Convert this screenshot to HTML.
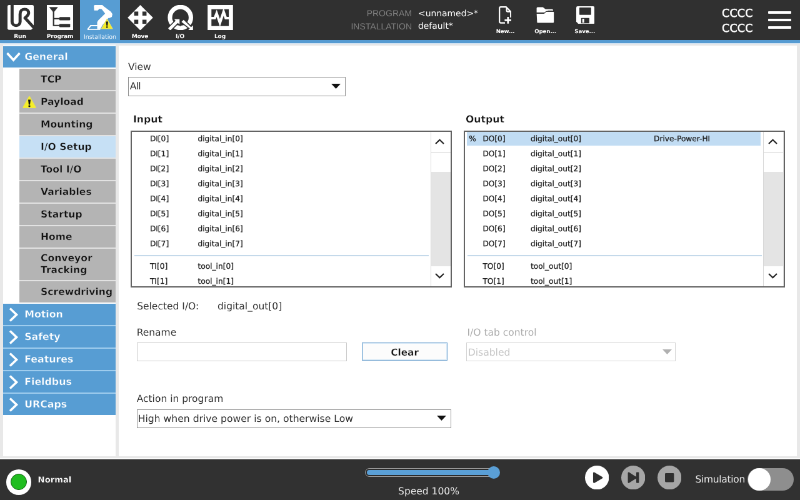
<!DOCTYPE html>
<html><head><meta charset="utf-8"><title>PolyScope - Installation - I/O Setup</title>
<style>
*{box-sizing:border-box;margin:0;padding:0}
html,body{width:800px;height:500px;overflow:hidden;background:#ebebeb}
body{font-family:"DejaVu Sans","Liberation Sans",sans-serif;color:#222;text-rendering:geometricPrecision}
#app{position:absolute;left:0;top:0;width:1280px;height:800px;transform:scale3d(.625,.625,1) translateZ(0);transform-origin:0 0;will-change:transform;background:#e8e8e8;overflow:hidden}
.abs{position:absolute}
#hdr{position:absolute;left:0;top:0;width:1280px;height:64px;background:#303030}
#hline{position:absolute;left:0;top:64px;width:1280px;height:4.600px;background:#569bd2;box-shadow:0 1.500px 1.500px #cfe2f2}
.tab{position:absolute;top:0;width:64px;height:64px;text-align:center}
.tab.sel{background:#579dd3;height:66px}
.tab svg{position:absolute;left:11.500px;top:7.700px;width:41px;height:40.600px}
.tab span{position:absolute;left:-10px;right:-10px;top:53px;font-size:9.100px;font-weight:bold;color:#fff;line-height:13px;white-space:nowrap;letter-spacing:-.200px}
.tab.sel span{font-weight:normal;font-size:9.400px;color:#f4f9fd;letter-spacing:0}
.hl{position:absolute;right:621px;font-family:"Liberation Sans",sans-serif;color:#808080;font-size:14px;line-height:20px;white-space:nowrap}
.hv{position:absolute;left:669px;color:#fff;font-size:13.900px;line-height:20px;white-space:nowrap}
.fl{position:absolute;width:60px;text-align:center;top:44.500px;font-size:8.700px;font-weight:bold;color:#fff;line-height:13px;letter-spacing:-.100px}
.cc{position:absolute;left:1155px;color:#fff;font-size:17.500px;line-height:20px;letter-spacing:.200px;-webkit-text-stroke:.550px #fff}
/* sidebar */
#side{position:absolute;left:5px;top:71px;width:180.200px;height:659px;background:linear-gradient(#e6f0f8,#fff 4px)}
.grp{position:absolute;left:0;width:179.500px;height:34.300px;background:#579dd3;color:#fff;font-weight:bold;font-size:15.800px;line-height:34px;padding-left:34.200px;-webkit-text-stroke:.400px #579dd3}
.grp svg{position:absolute;left:5px;top:6px;width:23px;height:23px}
.it{position:absolute;left:26px;width:153.500px;height:34px;background:#b4b4b4;color:#111;font-weight:bold;font-size:15.600px;line-height:34px;padding-left:34px;white-space:nowrap;-webkit-text-stroke:.400px #b4b4b4}
.it.sel{background:#c6e0f5;-webkit-text-stroke-color:#c6e0f5}
/* main */
#main{position:absolute;left:189.600px;top:72.800px;width:1085.600px;height:656.800px;background:#fff}
.lbl{position:absolute;font-size:15.500px;line-height:20px;color:#333;white-space:nowrap}
.lbl.b{font-weight:bold;font-size:15.700px;color:#111;-webkit-text-stroke:.350px #fff}
.sel-box{position:absolute;border:1.600px solid #8f8f8f;background:#fff;font-size:15.600px;color:#2a2a2a;white-space:nowrap}
.list{position:absolute;border:2px solid #636363;background:#fff;overflow:hidden}
.row{position:absolute;left:0;height:24px;font-size:12.200px;line-height:24px;color:#1c1c1c;white-space:nowrap;-webkit-text-stroke:.300px #1c1c1c}
.row span{position:absolute;top:0}
.sb{position:absolute;top:0;right:0;width:32.400px;bottom:0;background:#e4e4e4;border-left:1.400px solid #d8d8d8}
.sbb{position:absolute;left:0;width:31px;height:33.600px;background:#fff;border-bottom:1.400px solid #d0d0d0;border-top:0}
#ftr{position:absolute;left:0;top:736px;width:1280px;height:64px;background:#313131}
</style></head><body>
<div id="app">
<div id="hdr">
  <div class="tab" style="left:0"><svg viewBox="0 0 40 40" preserveAspectRatio="none" style="left:11.500px;width:42px;top:8.200px;height:39.800px"><rect width="40" height="40" rx="2.5" fill="#fff"/><path d="M7 -1V27a6.100 6.100 0 0 0 12.200 0V14.500c0-4.500 2.800-7.700 6.800-7.700s6.200 2.700 6.200 6c0 3.500-2.500 4.900-5.500 8.100L42 38.500" fill="none" stroke="#303030" stroke-width="4.700" stroke-linejoin="round"/><path d="M35 41L41 35V41z" fill="#303030"/></svg><span>Run</span></div>
  <div class="tab" style="left:64px"><svg viewBox="0 0 40 40" preserveAspectRatio="none" style="left:11px;width:42px"><rect width="40" height="40" fill="#fff"/><path d="M4 3.600h12.400l-6.200 8z" fill="#303030" stroke="#303030" stroke-width=".6"/><path d="M10.200 9V32.300H19M10.200 21.500H19" fill="none" stroke="#303030" stroke-width="2.100"/><rect x="19" y="19" width="16.500" height="5.200" rx="1.200" fill="#303030"/><rect x="19" y="29.700" width="16.500" height="5.200" rx="1.200" fill="#303030"/></svg><span>Program</span></div>
  <div class="tab sel" style="left:128px"><svg viewBox="0 0 40 40"><path d="M-.5 39L4.800 32.600H15.500M-.5 39H20" fill="none" stroke="#fff" stroke-width="1.900"/><path d="M9.800 1L11.300 0H23.300L25.200 1.900 36.700 10.600 39.100 14.400 38.200 18.700 34.800 20.400H32.900L23.300 31.700 20.400 37.500H15.100V26.900L17 24 27.600 13.500 22.300 6.700 18.500 5.800 16 8.700H10.300z" fill="#fff"/><path d="M30.500 22L39.300 37.500H21.800z" fill="#f4ec24" stroke="#ece56a" stroke-width="1" stroke-linejoin="round"/><path d="M28.900 26h3.400l-.8 6.800h-1.800z" fill="#1c1c1c"/><rect x="29.300" y="33.700" width="2.500" height="2.300" rx=".5" fill="#1c1c1c"/></svg><span>Installation</span></div>
  <div class="tab" style="left:192px"><svg viewBox="0 0 40 40"><path d="M20 0L40 20 20 40 0 20z" fill="#fff"/><g fill="#303030"><rect x="10.300" y="10.300" width="6.500" height="6.500"/><rect x="23.300" y="10.300" width="6.500" height="6.500"/><rect x="10.300" y="23.200" width="6.500" height="6.500"/><rect x="23.300" y="23.200" width="6.500" height="6.500"/></g></svg><span>Move</span></div>
  <div class="tab" style="left:256px"><svg viewBox="0 0 40 40"><circle cx="20.200" cy="19.700" r="16.500" fill="none" stroke="#fff" stroke-width="7"/><g stroke="#303030" stroke-width="3.200" fill="#fff" stroke-linejoin="miter" paint-order="stroke"><path d="M.8 36.800L12.600 25 10.500 22.300H18.800V30.600L16 28.400 4.200 40.200z"/><path d="M25.200 23.300L36.900 35 40 32V40H32L35 36.900 21.800 26.700z"/></g></svg><span>I/O</span></div>
  <div class="tab" style="left:320px"><svg viewBox="0 0 40 40"><rect width="40" height="40" fill="#fff"/><rect x="6" y="6.700" width="27.400" height="26.500" fill="#303030"/><path d="M5 20.700h6.200l3-7.500 5.200 15 5.800-17.500 3.400 10H35" fill="none" stroke="#fff" stroke-width="4" stroke-linejoin="miter"/></svg><span>Log</span></div>

  <div class="hl" style="top:10.600px">PROGRAM</div>
  <div class="hl" style="top:31.600px">INSTALLATION</div>
  <div class="hv" style="top:11.500px">&lt;unnamed&gt;*</div>
  <div class="hv" style="top:32px">default*</div>

  <svg class="abs" style="left:797.800px;top:9.800px" width="20.600" height="28" viewBox="0 0 20.600 28"><path d="M1.200 3.200q0-2 2-2H12l7.200 7.500V18M12.600 1.500v5.300q0 1.800 1.800 1.800h4.500M1.200 3v21.600q0 2 2 2H10" fill="none" stroke="#fff" stroke-width="2.200" stroke-linejoin="round"/><path d="M14.800 17v10.800M9.400 22.400h11" stroke="#fff" stroke-width="2.700" fill="none"/></svg>
  <svg class="abs" style="left:858px;top:10.600px" width="28.800" height="26.200" viewBox="0 0 28.800 26.200"><path d="M.6 2q0-1.600 1.600-1.600h8.400l4.300 3.400h10.600q1.300 0 1.300 1.300v4H.6z" fill="#fff"/><rect x="18.300" y="5" width="8.500" height="3" fill="#b9b9b9"/><path d="M0 10.400h12.400l3.500-3h11.500q1.400 0 1.400 1.400v15.400q0 1.800-1.800 1.800H2.400Q.8 26 .8 24.400z" fill="#fff" stroke="#303030" stroke-width="1.100"/></svg>
  <svg class="abs" style="left:921.600px;top:9.500px" width="29.200" height="28.400" viewBox="0 0 29.200 28.400"><path d="M2.400 0h24.400q2.400 0 2.400 2.400v23.600q0 2.400-2.400 2.400H3.600L0 24.800V2.400Q0 0 2.400 0z" fill="#fff"/><rect x="5" y="2" width="18.800" height="11.800" rx=".8" fill="#303030"/><rect x="7.900" y="18.700" width="13" height="8.600" rx=".6" fill="#303030"/><rect x="9.700" y="20" width="3" height="6.400" fill="#fff"/></svg>
  <div class="fl" style="left:778.600px">New...</div>
  <div class="fl" style="left:842.600px">Open...</div>
  <div class="fl" style="left:905.800px">Save...</div>

  <div class="cc" style="top:12.300px">CCCC</div>
  <div class="cc" style="top:36.300px">CCCC</div>
  <div class="abs" style="left:1229px;top:18.400px;width:37px;height:4px;background:#fff;border-radius:1px"></div>
  <div class="abs" style="left:1229px;top:30.400px;width:37px;height:4px;background:#fff;border-radius:1px"></div>
  <div class="abs" style="left:1229px;top:42.400px;width:37px;height:4px;background:#fff;border-radius:1px"></div>
</div>
<div id="hline"></div>

<div id="side">
  <div class="abs" style="left:26px;top:41px;width:153.500px;height:371px;background:#e2e2e2"></div>
  <div class="abs" style="left:0;top:417px;width:179.500px;height:175px;background:#9fcdee"></div>
  <div class="grp" style="top:3px"><svg viewBox="0 0 23 23"><path d="M1.500 5L11.500 16 21.500 5" fill="none" stroke="#fff" stroke-width="3.600"/></svg>General</div>
  <div class="it" style="top:39.3px">TCP</div>
  <div class="it" style="top:75.3px"><svg class="abs" style="left:5px;top:6.500px" width="22" height="21" viewBox="0 0 21 20"><path d="M10.500 2L19.500 18H1.500z" fill="#f7f022" stroke="#f1ea3a" stroke-width="2.200" stroke-linejoin="round"/><path d="M8.600 6.200h3.800l-.9 7.600h-2z" fill="#111"/><rect x="9.100" y="14.800" width="2.800" height="2.600" rx=".6" fill="#111"/></svg>Payload</div>
  <div class="it" style="top:111.3px">Mounting</div>
  <div class="it sel" style="top:147.3px">I/O Setup</div>
  <div class="it" style="top:183.3px">Tool I/O</div>
  <div class="it" style="top:219.3px">Variables</div>
  <div class="it" style="top:255.3px">Startup</div>
  <div class="it" style="top:291.3px">Home</div>
  <div class="it" style="top:327.300px;height:50px;line-height:19px;padding-top:6px;white-space:normal">Conveyor<br>Tracking</div>
  <div class="it" style="top:379.3px">Screwdriving</div>
  <div class="grp" style="top:415px"><svg viewBox="0 0 23 23"><path d="M6 1.500L16.500 11.500 6 21.500" fill="none" stroke="#fff" stroke-width="3.600"/></svg>Motion</div>
  <div class="grp" style="top:451px"><svg viewBox="0 0 23 23"><path d="M6 1.500L16.500 11.500 6 21.500" fill="none" stroke="#fff" stroke-width="3.600"/></svg>Safety</div>
  <div class="grp" style="top:487px"><svg viewBox="0 0 23 23"><path d="M6 1.500L16.500 11.500 6 21.500" fill="none" stroke="#fff" stroke-width="3.600"/></svg>Features</div>
  <div class="grp" style="top:523px"><svg viewBox="0 0 23 23"><path d="M6 1.500L16.500 11.500 6 21.500" fill="none" stroke="#fff" stroke-width="3.600"/></svg>Fieldbus</div>
  <div class="grp" style="top:559px"><svg viewBox="0 0 23 23"><path d="M6 1.500L16.500 11.500 6 21.500" fill="none" stroke="#fff" stroke-width="3.600"/></svg>URCaps</div>
</div>

<div id="main">
  <div class="lbl" style="left:15.4px;top:24.100px">View</div>
  <div class="sel-box" style="left:15.6px;top:50.600px;width:348.200px;height:30.600px;line-height:28.700px;padding-left:1.500px;letter-spacing:-.700px">All<svg class="abs" style="right:7.300px;top:9.500px" width="15" height="8" viewBox="0 0 15 8"><path d="M0 0h15L7.500 8z" fill="#111"/></svg></div>

  <div class="lbl b" style="left:23.4px;top:107.8px">Input</div>
  <div class="lbl b" style="left:555.4px;top:107.8px">Output</div>

  <div class="list" style="left:19.8px;top:135.8px;width:513.900px;height:251.100px">
    <div class="row" style="top:-0.3px"><span style="left:28.500px">DI[0]</span><span style="left:105px">digital_in[0]</span></div>
    <div class="row" style="top:23.7px"><span style="left:28.500px">DI[1]</span><span style="left:105px">digital_in[1]</span></div>
    <div class="row" style="top:47.7px"><span style="left:28.500px">DI[2]</span><span style="left:105px">digital_in[2]</span></div>
    <div class="row" style="top:71.7px"><span style="left:28.500px">DI[3]</span><span style="left:105px">digital_in[3]</span></div>
    <div class="row" style="top:95.7px"><span style="left:28.500px">DI[4]</span><span style="left:105px">digital_in[4]</span></div>
    <div class="row" style="top:119.7px"><span style="left:28.500px">DI[5]</span><span style="left:105px">digital_in[5]</span></div>
    <div class="row" style="top:143.7px"><span style="left:28.500px">DI[6]</span><span style="left:105px">digital_in[6]</span></div>
    <div class="row" style="top:167.7px"><span style="left:28.500px">DI[7]</span><span style="left:105px">digital_in[7]</span></div>
    <div class="abs" style="left:4px;top:197.400px;width:471px;height:2.200px;background:#c4d9ea"></div>
    <div class="row" style="top:203.8px"><span style="left:28.500px">TI[0]</span><span style="left:105px">tool_in[0]</span></div>
    <div class="row" style="top:227.8px"><span style="left:28.500px">TI[1]</span><span style="left:105px">tool_in[1]</span></div>
    <div class="sb"><div class="abs" style="left:0;top:33.600px;width:31px;height:31px;background:#fff"></div><div class="sbb" style="top:0"><svg class="abs" style="left:6.500px;top:11.500px" width="15" height="9" viewBox="0 0 15 9"><path d="M1 8L7.500 1.800 14 8" fill="none" stroke="#222" stroke-width="2.200"/></svg></div><div class="sbb" style="bottom:0;border-bottom:0;height:32px"><svg class="abs" style="left:6.500px;top:11.500px" width="15" height="9" viewBox="0 0 15 9"><path d="M1 1L7.500 7.200 14 1" fill="none" stroke="#222" stroke-width="2.200"/></svg></div></div>
  </div>

  <div class="list" style="left:552.3px;top:135.8px;width:513.900px;height:251.100px">
    <div class="abs" style="left:3.500px;top:.6px;width:470px;height:21.400px;background:#c1dcf3"></div>
    <div class="row" style="top:-0.3px"><span style="left:6.300px">%</span><span style="left:28.500px">DO[0]</span><span style="left:105px">digital_out[0]</span><span style="left:302.200px">Drive-Power-HI</span></div>
    <div class="row" style="top:23.7px"><span style="left:28.500px">DO[1]</span><span style="left:105px">digital_out[1]</span></div>
    <div class="row" style="top:47.7px"><span style="left:28.500px">DO[2]</span><span style="left:105px">digital_out[2]</span></div>
    <div class="row" style="top:71.7px"><span style="left:28.500px">DO[3]</span><span style="left:105px">digital_out[3]</span></div>
    <div class="row" style="top:95.7px"><span style="left:28.500px">DO[4]</span><span style="left:105px">digital_out[4]</span></div>
    <div class="row" style="top:119.7px"><span style="left:28.500px">DO[5]</span><span style="left:105px">digital_out[5]</span></div>
    <div class="row" style="top:143.7px"><span style="left:28.500px">DO[6]</span><span style="left:105px">digital_out[6]</span></div>
    <div class="row" style="top:167.7px"><span style="left:28.500px">DO[7]</span><span style="left:105px">digital_out[7]</span></div>
    <div class="abs" style="left:4px;top:197.400px;width:471px;height:2.200px;background:#c4d9ea"></div>
    <div class="row" style="top:203.8px"><span style="left:28.500px">TO[0]</span><span style="left:105px">tool_out[0]</span></div>
    <div class="row" style="top:227.8px"><span style="left:28.500px">TO[1]</span><span style="left:105px">tool_out[1]</span></div>
    <div class="sb"><div class="abs" style="left:0;top:33.600px;width:31px;height:31px;background:#fff"></div><div class="sbb" style="top:0"><svg class="abs" style="left:6.500px;top:11.500px" width="15" height="9" viewBox="0 0 15 9"><path d="M1 8L7.500 1.800 14 8" fill="none" stroke="#222" stroke-width="2.200"/></svg></div><div class="sbb" style="bottom:0;border-bottom:0;height:32px"><svg class="abs" style="left:6.500px;top:11.500px" width="15" height="9" viewBox="0 0 15 9"><path d="M1 1L7.500 7.200 14 1" fill="none" stroke="#222" stroke-width="2.200"/></svg></div></div>
  </div>

  <div class="lbl" style="left:29.6px;top:407.3px">Selected I/O:</div>
  <div class="lbl" style="left:158.4px;top:407.3px">digital_out[0]</div>
  <div class="lbl" style="left:29.1px;top:448.9px">Rename</div>
  <div class="abs" style="left:29.1px;top:474.9px;width:336.700px;height:29.900px;border:1.600px solid #c9c9c9;background:#fff"></div>
  <div class="abs" style="left:389.1px;top:475.0px;width:137.800px;height:29.600px;border:1.600px solid #6a9fcd;box-shadow:inset 0 0 0 1px #d3e6f5;background:#fcfcfc;text-align:center;font-weight:bold;font-size:15.300px;line-height:31px;color:#111;-webkit-text-stroke:.350px #fcfcfc">Clear</div>
  <div class="lbl" style="left:557.9px;top:448.9px;color:#ababab">I/O tab control</div>
  <div class="sel-box" style="left:556.6px;top:474.9px;width:335.200px;height:29.900px;line-height:30.500px;padding-left:1.500px;color:#c4c4c4;border-color:#d2d2d2">Disabled<svg class="abs" style="right:5.500px;top:10.500px" width="15" height="8" viewBox="0 0 15 8"><path d="M0 0h15L7.500 8z" fill="#b0b0b0"/></svg></div>
  <div class="lbl" style="left:29.1px;top:555.2px">Action in program</div>
  <div class="sel-box" style="left:29.2px;top:582.0px;width:503px;height:30.400px;line-height:28.700px;padding-left:1px">High when drive power is on, otherwise Low<svg class="abs" style="right:6.5px;top:9.5px" width="15" height="8" viewBox="0 0 15 8"><path d="M0 0h15L7.500 8z" fill="#111"/></svg></div>
</div>

<div class="abs" style="left:0;top:732.600px;width:1280px;height:2.600px;background:#fafafa"></div>
<div class="abs" style="left:0;top:735.200px;width:1280px;height:3px;background:#1e1e1e"></div>
<div id="ftr">
  <div class="abs" style="left:9.600px;top:14.800px;width:40.800px;height:40.800px;border-radius:50%;background:#fff"></div>
  <div class="abs" style="left:17px;top:22.200px;width:26px;height:26px;border-radius:50%;background:#20bd20;border:1.800px solid #0c5f0c"></div>
  <div class="abs" style="left:60.600px;top:23.800px;color:#fff;font-weight:bold;font-size:13.200px;line-height:18px;-webkit-text-stroke:.300px #313131">Normal</div>
  <div class="abs" style="left:583.500px;top:12.600px;width:209px;height:14.200px;border-radius:7.100px;background:#2b2b2b;border:1.400px solid #a2a2a2"></div>
  <div class="abs" style="left:586.500px;top:15.600px;width:200px;height:8.200px;border-radius:4.100px;background:#5a9fd6"></div>
  <div class="abs" style="left:780px;top:9.700px;width:20px;height:20px;border-radius:50%;background:#5a9fd6"></div>
  <div class="abs" style="left:586px;top:39.800px;width:200px;text-align:center;color:#e6e6e6;font-size:15.500px;line-height:20px">Speed 100%</div>
  <svg class="abs" style="left:935.600px;top:8.800px" width="38.400" height="38.400" viewBox="0 0 40 40"><circle cx="20" cy="20" r="20" fill="#fff"/><path d="M15 12.500L28 20 15 27.500z" fill="#303030" stroke="#303030" stroke-width="3" stroke-linejoin="round"/></svg>
  <svg class="abs" style="left:993.900px;top:8.800px" width="38.400" height="38.400" viewBox="0 0 40 40"><circle cx="20" cy="20" r="20" fill="#a6a6a6"/><path d="M12.500 12.500L24 20 12.500 27.500z" fill="#303030" stroke="#303030" stroke-width="3" stroke-linejoin="round"/><rect x="25" y="11" width="4.500" height="18" rx="1" fill="#303030"/></svg>
  <svg class="abs" style="left:1052px;top:8.800px" width="38.400" height="38.400" viewBox="0 0 40 40"><circle cx="20" cy="20" r="20" fill="#a6a6a6"/><rect x="12.500" y="12.500" width="15" height="15" rx="1.500" fill="#303030"/></svg>
  <div class="abs" style="left:1112.500px;top:21.300px;color:#e6e6e6;font-size:15.500px;line-height:20px;letter-spacing:-.3px">Simulation</div>
  <div class="abs" style="left:1196px;top:13.100px;width:74.400px;height:36px;border-radius:18px;background:#8e8e8e"></div>
  <div class="abs" style="left:1196.500px;top:13.100px;width:36px;height:36px;border-radius:50%;background:#fff"></div>
</div>
</div>
</body></html>
